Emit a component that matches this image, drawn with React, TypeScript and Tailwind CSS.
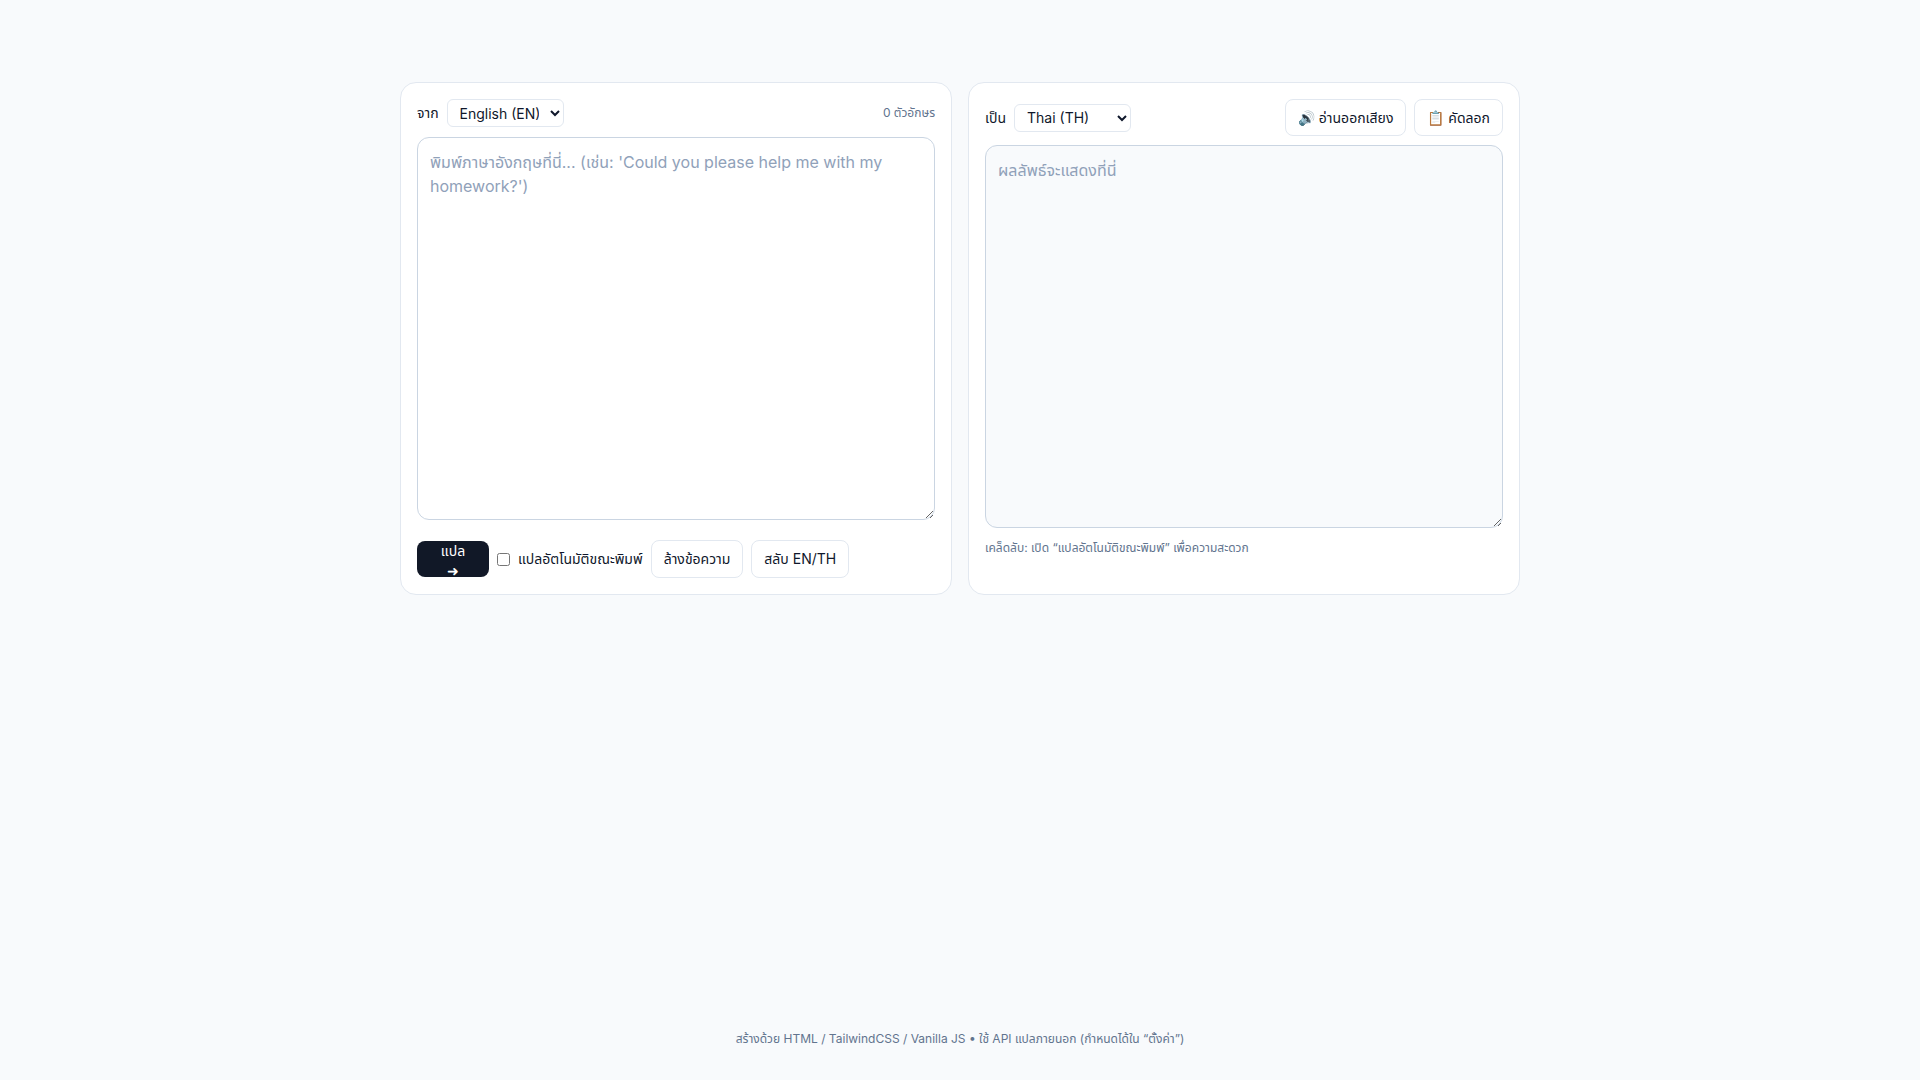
import React from "react";

const font = { fontFamily: 'Inter, "Noto Sans", "Noto Sans Thai", sans-serif' };

export default function App() {
  return (
    <div style={font} className="min-h-screen bg-slate-50 text-slate-900 flex flex-col">
      <main className="flex-1 w-full max-w-6xl mx-auto px-4 pt-[82px]">
        <div className="grid grid-cols-2 gap-4">
          <section className="bg-white border border-slate-200 rounded-2xl p-4">
            <div className="flex items-center justify-between h-[28px]">
              <div className="flex items-center gap-2">
                <span className="text-sm">จาก</span>
                <select className="border border-slate-200 rounded-md px-2 h-[28px] text-sm bg-white w-[117px]">
                  <option>English (EN)</option>
                </select>
              </div>
              <span className="text-xs text-slate-500">0 ตัวอักษร</span>
            </div>
            <textarea
              className="mt-[10px] w-full h-[383px] border border-slate-300 rounded-xl p-3 text-base leading-6 placeholder:text-slate-400 resize-y block"
              placeholder="พิมพ์ภาษาอังกฤษที่นี่... (เช่น: 'Could you please help me with my homework?')"
            />
            <div className="mt-[20px] flex items-center gap-2">
              <button className="bg-[#111827] text-white text-sm rounded-lg px-4 h-[36px] w-[72px]">แปล ➜</button>
              <label className="flex items-center gap-2 text-sm">
                <input type="checkbox" className="w-[13px] h-[13px]" />
                แปลอัตโนมัติขณะพิมพ์
              </label>
              <button className="border border-slate-200 rounded-lg px-3 h-[38px] text-sm bg-white">ล้างข้อความ</button>
              <button className="border border-slate-200 rounded-lg px-3 h-[38px] text-sm bg-white">สลับ EN/TH</button>
            </div>
          </section>
          <section className="bg-white border border-slate-200 rounded-2xl p-4">
            <div className="flex items-center justify-between h-[37px]">
              <div className="flex items-center gap-2">
                <span className="text-sm">เป็น</span>
                <select className="border border-slate-200 rounded-md px-2 h-[28px] text-sm bg-white w-[117px]">
                  <option>Thai (TH)</option>
                </select>
              </div>
              <div className="flex items-center gap-2">
                <button className="border border-slate-200 rounded-lg px-3 h-[37px] text-sm bg-white">🔊 อ่านออกเสียง</button>
                <button className="border border-slate-200 rounded-lg px-3 h-[37px] text-sm bg-white">📋 คัดลอก</button>
              </div>
            </div>
            <textarea
              readOnly
              className="mt-[9px] w-full h-[383px] border border-slate-300 rounded-xl p-3 text-base leading-6 bg-slate-50 placeholder:text-slate-400 resize-y block"
              placeholder="ผลลัพธ์จะแสดงที่นี่"
            />
            <p className="mt-[12px] text-xs text-slate-500">เคล็ดลับ: เปิด “แปลอัตโนมัติขณะพิมพ์” เพื่อความสะดวก</p>
          </section>
        </div>
      </main>
      <footer className="text-center text-xs text-slate-500 pb-[33px]">
        สร้างด้วย HTML / TailwindCSS / Vanilla JS • ใช้ API แปลภายนอก (กำหนดได้ใน “ตั้งค่า”)
      </footer>
    </div>
  );
}
